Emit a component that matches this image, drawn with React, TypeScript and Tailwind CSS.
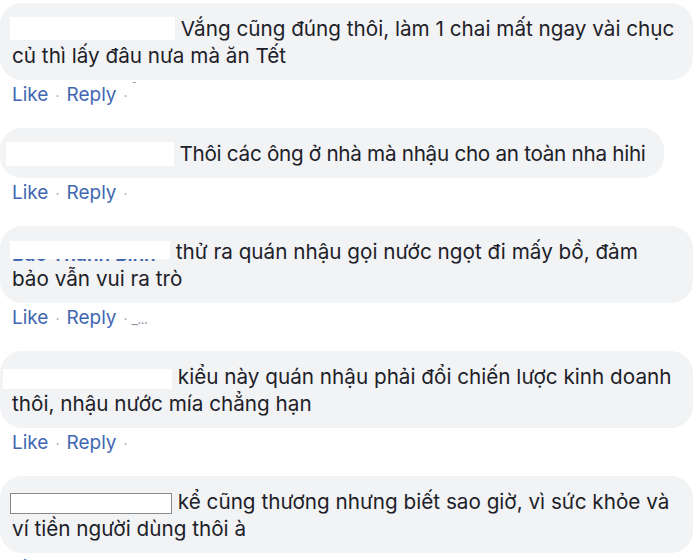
import React from "react";

type Comment = {
  text: React.ReactNode;
  full: boolean;
  box: string;
  extra?: string;
  tail?: React.ReactNode;
  hiddenName?: string;
};

const comments: Comment[] = [
  {
    full: true,
    box: "w-[165px] h-[23px] -ml-[2px] -translate-y-[2px]",
    text: (
      <>
        Vắng cũng đúng thôi, làm 1 chai mất ngay vài chục
        <br />
        củ thì lấy đâu nưa mà ăn Tết
      </>
    ),
    tail: <span className="text-[#90949c] text-[12px] -translate-y-[8px] inline-block ml-1">ˉ</span>,
  },
  {
    full: false,
    box: "w-[168px] h-[24px] -ml-[6px] -translate-y-[1px]",
    extra: "tracking-[-0.3px]",
    text: <>Thôi các ông ở nhà mà nhậu cho an toàn nha hihi</>,
  },
  {
    full: true,
    box: "w-[160px] h-[21px] -ml-[2px] -translate-y-[2px]",
    hiddenName: "Bảo Thanh Bình",
    text: (
      <>
        thử ra quán nhậu gọi nước ngọt đi mấy bồ, đảm
        <br />
        bảo vẫn vui ra trò
      </>
    ),
    tail: <span className="text-[#90949c] text-[14px] ml-1 tracking-tighter">_...</span>,
  },
  {
    full: true,
    box: "w-[169px] h-[20px] -ml-[9px]",
    text: (
      <>
        kiểu này quán nhậu phải đổi chiến lược kinh doanh
        <br />
        thôi, nhậu nước mía chẳng hạn
      </>
    ),
  },
  {
    full: true,
    box: "w-[162px] h-[21px] -ml-[2px] border border-[#8a8a8a]",
    text: (
      <>
        kể cũng thương nhưng biết sao giờ, vì sức khỏe và
        <br />
        ví tiền người dùng thôi à
      </>
    ),
  },
];

const NameBox = ({ c }: { c: Comment }) => {
  if (c.hiddenName) {
    return (
      <span className={`relative inline-block align-middle overflow-hidden ${c.box}`}>
        <span className="absolute left-[2px] bottom-[-6px] whitespace-nowrap text-[#4267b2] font-semibold text-[19px]">
          {c.hiddenName}
        </span>
        <span className="absolute inset-x-0 top-0 h-[18px] bg-white" />
      </span>
    );
  }
  return <span className={`inline-block align-middle bg-white ${c.box}`} />;
};

export default function App() {
  return (
    <div className="w-[700px] h-[560px] bg-white overflow-hidden font-['Inter','Liberation_Sans',sans-serif]">
      <div className="w-[693px] pt-[3px]">
        {comments.map((c, i) => (
          <div key={i} className="mb-[18px]">
            <div
              className={`${c.full ? "w-full" : "w-fit"} ${c.extra ?? ""} bg-[#f2f3f5] rounded-[22px] pl-3 pr-[18px] pt-3 pb-[11px] text-[20.7px] leading-[27px] text-[#1d2129]`}
            >
              <NameBox c={c} /> {c.text}
            </div>
            <div className="h-[30px] flex items-center pl-3 text-[19px] text-[#4267b2]">
              <span>Like</span>
              <span className="text-[#a0a4ab] mx-[7px] text-[14px]">·</span>
              <span>Reply</span>
              <span className="text-[#a0a4ab] ml-[7px] text-[14px]">·</span>
              {c.tail}
            </div>
          </div>
        ))}
      </div>
    </div>
  );
}
